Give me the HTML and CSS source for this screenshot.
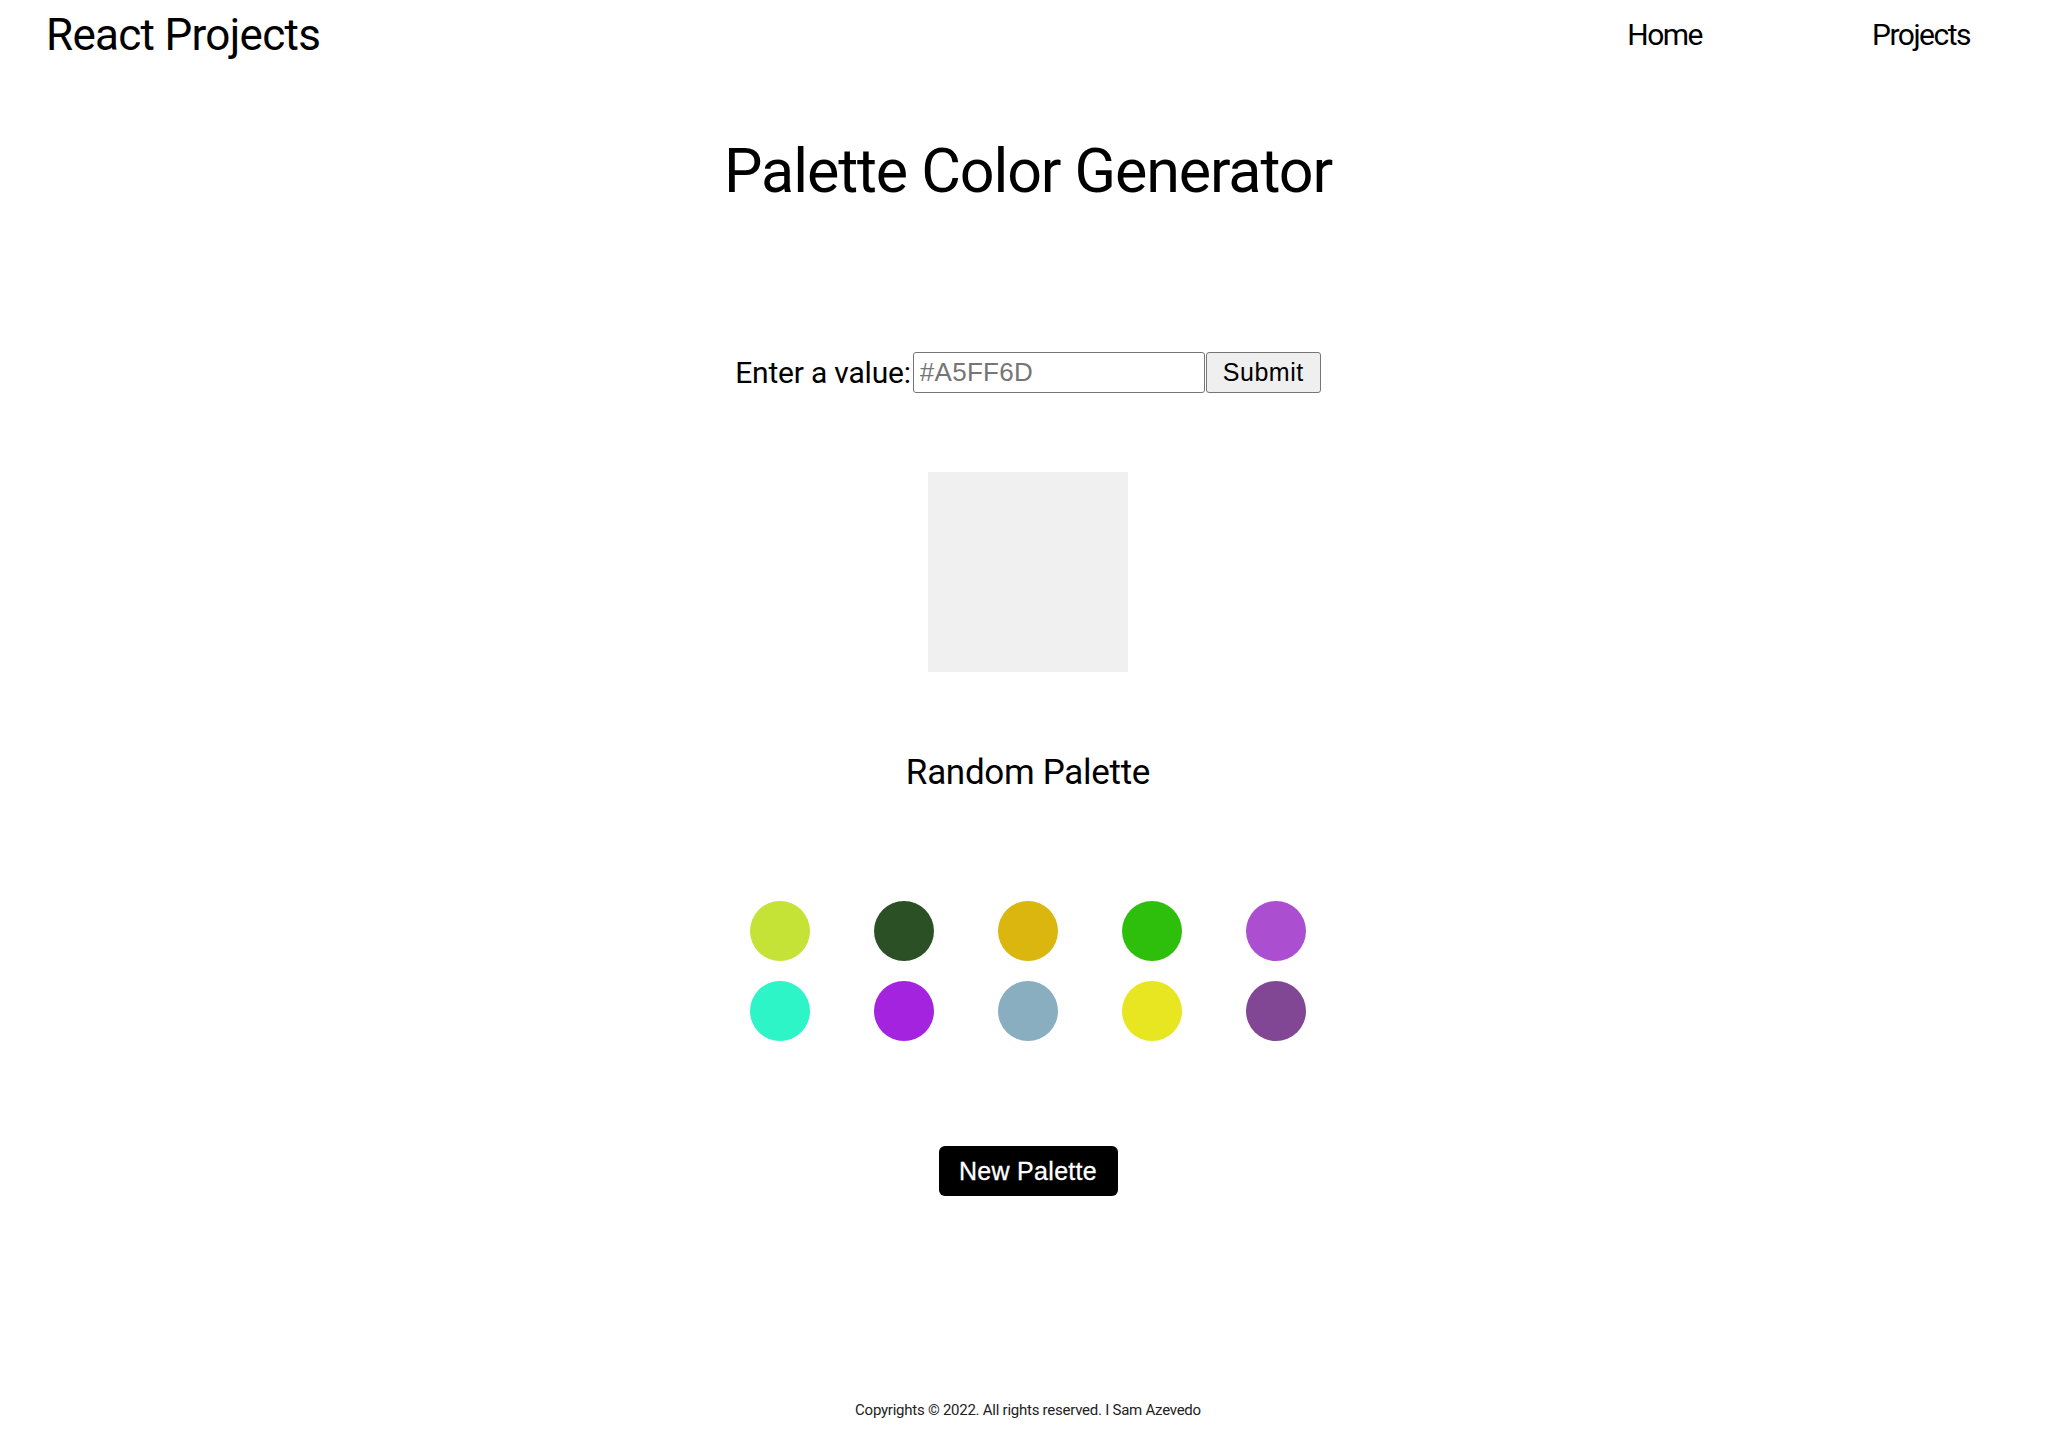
FILE: index.html
```html
<!DOCTYPE html>
<html lang="en">
<head>
<meta charset="utf-8">
<title>Palette Color Generator</title>
<link rel="stylesheet" href="styles.css">
</head>
<body>
<nav class="nav">
  <a class="brand" href="#">React Projects</a>
  <div class="links">
    <a class="link" href="#">Home</a>
    <a class="link" href="#">Projects</a>
  </div>
</nav>
<main class="main">
  <h1 class="title">Palette Color Generator</h1>
  <form class="form">
    <label class="label" for="val">Enter a value:</label>
    <input class="input" id="val" type="text" placeholder="#A5FF6D">
    <button class="submit" type="button">Submit</button>
  </form>
  <div class="preview"></div>
  <h2 class="subtitle">Random Palette</h2>
  <div class="palette">
    <span class="dot" style="background:#c5e336"></span>
    <span class="dot" style="background:#2c5026"></span>
    <span class="dot" style="background:#dab60f"></span>
    <span class="dot" style="background:#2ebf0d"></span>
    <span class="dot" style="background:#ab4fd0"></span>
    <span class="dot" style="background:#2ef5c7"></span>
    <span class="dot" style="background:#a323df"></span>
    <span class="dot" style="background:#88aec0"></span>
    <span class="dot" style="background:#e8e620"></span>
    <span class="dot" style="background:#814794"></span>
  </div>
  <button class="new" type="button">New Palette</button>
</main>
<footer class="footer">Copyrights © 2022. All rights reserved. I Sam Azevedo</footer>
</body>
</html>
```
FILE: styles.css
```css
* { box-sizing: border-box; }
html, body { margin: 0; padding: 0; background: #fff; }
body {
  font-family: Roboto, "Liberation Sans", sans-serif;
  color: #000;
  width: 2056px;
  min-height: 1440px;
}
a { color: inherit; text-decoration: none; }

.nav {
  display: flex;
  justify-content: space-between;
  align-items: center;
  height: 70px;
  padding: 0 86px 0 46px;
}
.brand {
  font-size: 44px;
  line-height: 1;
  letter-spacing: -0.7px;
}
.links {
  display: flex;
  gap: 170px;
}
.link {
  font-size: 30px;
  line-height: 1;
  letter-spacing: -1.5px;
}

.main {
  display: flex;
  flex-direction: column;
  align-items: center;
}
.title {
  margin: 71px 0 0;
  font-size: 61px;
  font-weight: 400;
  line-height: 1;
  letter-spacing: -1.1px;
}
.form {
  display: flex;
  align-items: center;
  margin-top: 150px;
}
.label {
  font-size: 30px;
  line-height: 1;
  letter-spacing: -0.2px;
  margin-right: 2px;
}
.input {
  width: 292px;
  height: 41px;
  border: 1px solid #767676;
  border-radius: 3px;
  padding: 0 6px;
  font-family: "Liberation Sans", Arial, sans-serif;
  font-size: 26px;
  letter-spacing: 0.3px;
  color: #000;
  background: #fff;
}
.input::placeholder { color: #757575; }
.submit {
  width: 115px;
  height: 41px;
  margin-left: 1px;
  border: 1px solid #767676;
  border-radius: 3px;
  background: #efefef;
  font-family: "Liberation Sans", Arial, sans-serif;
  font-size: 25px;
  letter-spacing: 0.5px;
  color: #000;
  padding: 0;
}
.preview {
  width: 200px;
  height: 200px;
  margin-top: 79px;
  background: #f0f0f0;
}
.subtitle {
  margin: 83px 0 0;
  font-size: 35px;
  font-weight: 400;
  line-height: 1;
  letter-spacing: -0.3px;
}
.palette {
  display: grid;
  grid-template-columns: repeat(5, 60px);
  column-gap: 64px;
  row-gap: 20px;
  margin-top: 111px;
}
.dot {
  width: 60px;
  height: 60px;
  border-radius: 50%;
}
.new {
  margin-top: 105px;
  height: 50px;
  width: 179px;
  padding: 0;
  border: none;
  border-radius: 6px;
  background: #000;
  color: #fff;
  font-family: "Liberation Sans", Arial, sans-serif;
  font-size: 25px;
  letter-spacing: 0.3px;
  -webkit-text-stroke: 0.3px #fff;
}
.footer {
  margin-top: 207px;
  text-align: center;
  font-size: 15px;
  line-height: 1;
  letter-spacing: -0.25px;
  color: #222;
}
```
